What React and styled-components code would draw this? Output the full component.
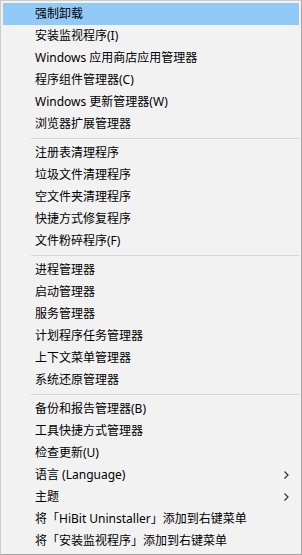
import React from 'react';
import styled, { createGlobalStyle } from 'styled-components';

const GlobalStyle = createGlobalStyle`
    html, body {
        margin: 0;
        padding: 0;
        background: #f2f2f2;
    }
`

const groups = [
    [
        { label: '强制卸载', active: true },
        { label: '安装监视程序(I)' },
        { label: 'Windows 应用商店应用管理器' },
        { label: '程序组件管理器(C)' },
        { label: 'Windows 更新管理器(W)' },
        { label: '浏览器扩展管理器' }
    ],
    [
        { label: '注册表清理程序' },
        { label: '垃圾文件清理程序' },
        { label: '空文件夹清理程序' },
        { label: '快捷方式修复程序' },
        { label: '文件粉碎程序(F)' }
    ],
    [
        { label: '进程管理器' },
        { label: '启动管理器' },
        { label: '服务管理器' },
        { label: '计划程序任务管理器' },
        { label: '上下文菜单管理器' },
        { label: '系统还原管理器' }
    ],
    [
        { label: '备份和报告管理器(B)' },
        { label: '工具快捷方式管理器' },
        { label: '检查更新(U)' },
        { label: '语言 (Language)', sub: true },
        { label: '主题', sub: true },
        { label: '将「HiBit Uninstaller」添加到右键菜单' },
        { label: '将「安装监视程序」添加到右键菜单' }
    ]
]

const Chevron = () => (
    <svg width="5" height="8" viewBox="0 0 5 8">
        <path d="M0.5 0.5 L4 4 L0.5 7.5" fill="none" stroke="#333" strokeWidth="1.2" />
    </svg>
)

const App = () => (
    <>
        <GlobalStyle />
        <Menu>
            {groups.map((group, gi) => (
                <React.Fragment key={gi}>
                    {gi > 0 && <Separator />}
                    {group.map(item => (
                        <Item key={item.label} active={item.active}>
                            <Label>{item.label}</Label>
                            {item.sub && <Arrow><Chevron /></Arrow>}
                        </Item>
                    ))}
                </React.Fragment>
            ))}
        </Menu>
    </>
)

const Menu = styled.div `
    box-sizing: border-box;
    width: 302px;
    height: 555px;
    padding: 2px;
    background: #f2f2f2;
    border: 1px solid #cccccc;
    border-right-color: #a6a6a6;
    border-bottom-color: #a6a6a6;
    display: flex;
    flex-direction: column;
    font-family: "Segoe UI", "Noto Sans", "Noto Sans CJK SC", sans-serif;
    font-size: 12px;
    color: #000;
`

const Item = styled.div `
    height: 22px;
    display: flex;
    align-items: center;
    padding-left: 32px;
    padding-right: 10px;
    background: ${props => props.active ? '#91c9f7' : 'transparent'};
`

const Label = styled.span `
    flex: 1;
    white-space: nowrap;
    line-height: 22px;
`

const Arrow = styled.span `
    display: flex;
    align-items: center;
`

const Separator = styled.div `
    height: 7px;
    display: flex;
    align-items: center;
    margin-left: 28px;
    &::after {
        content: '';
        flex: 1;
        height: 1px;
        background: #d7d7d7;
    }
`

export default App;
